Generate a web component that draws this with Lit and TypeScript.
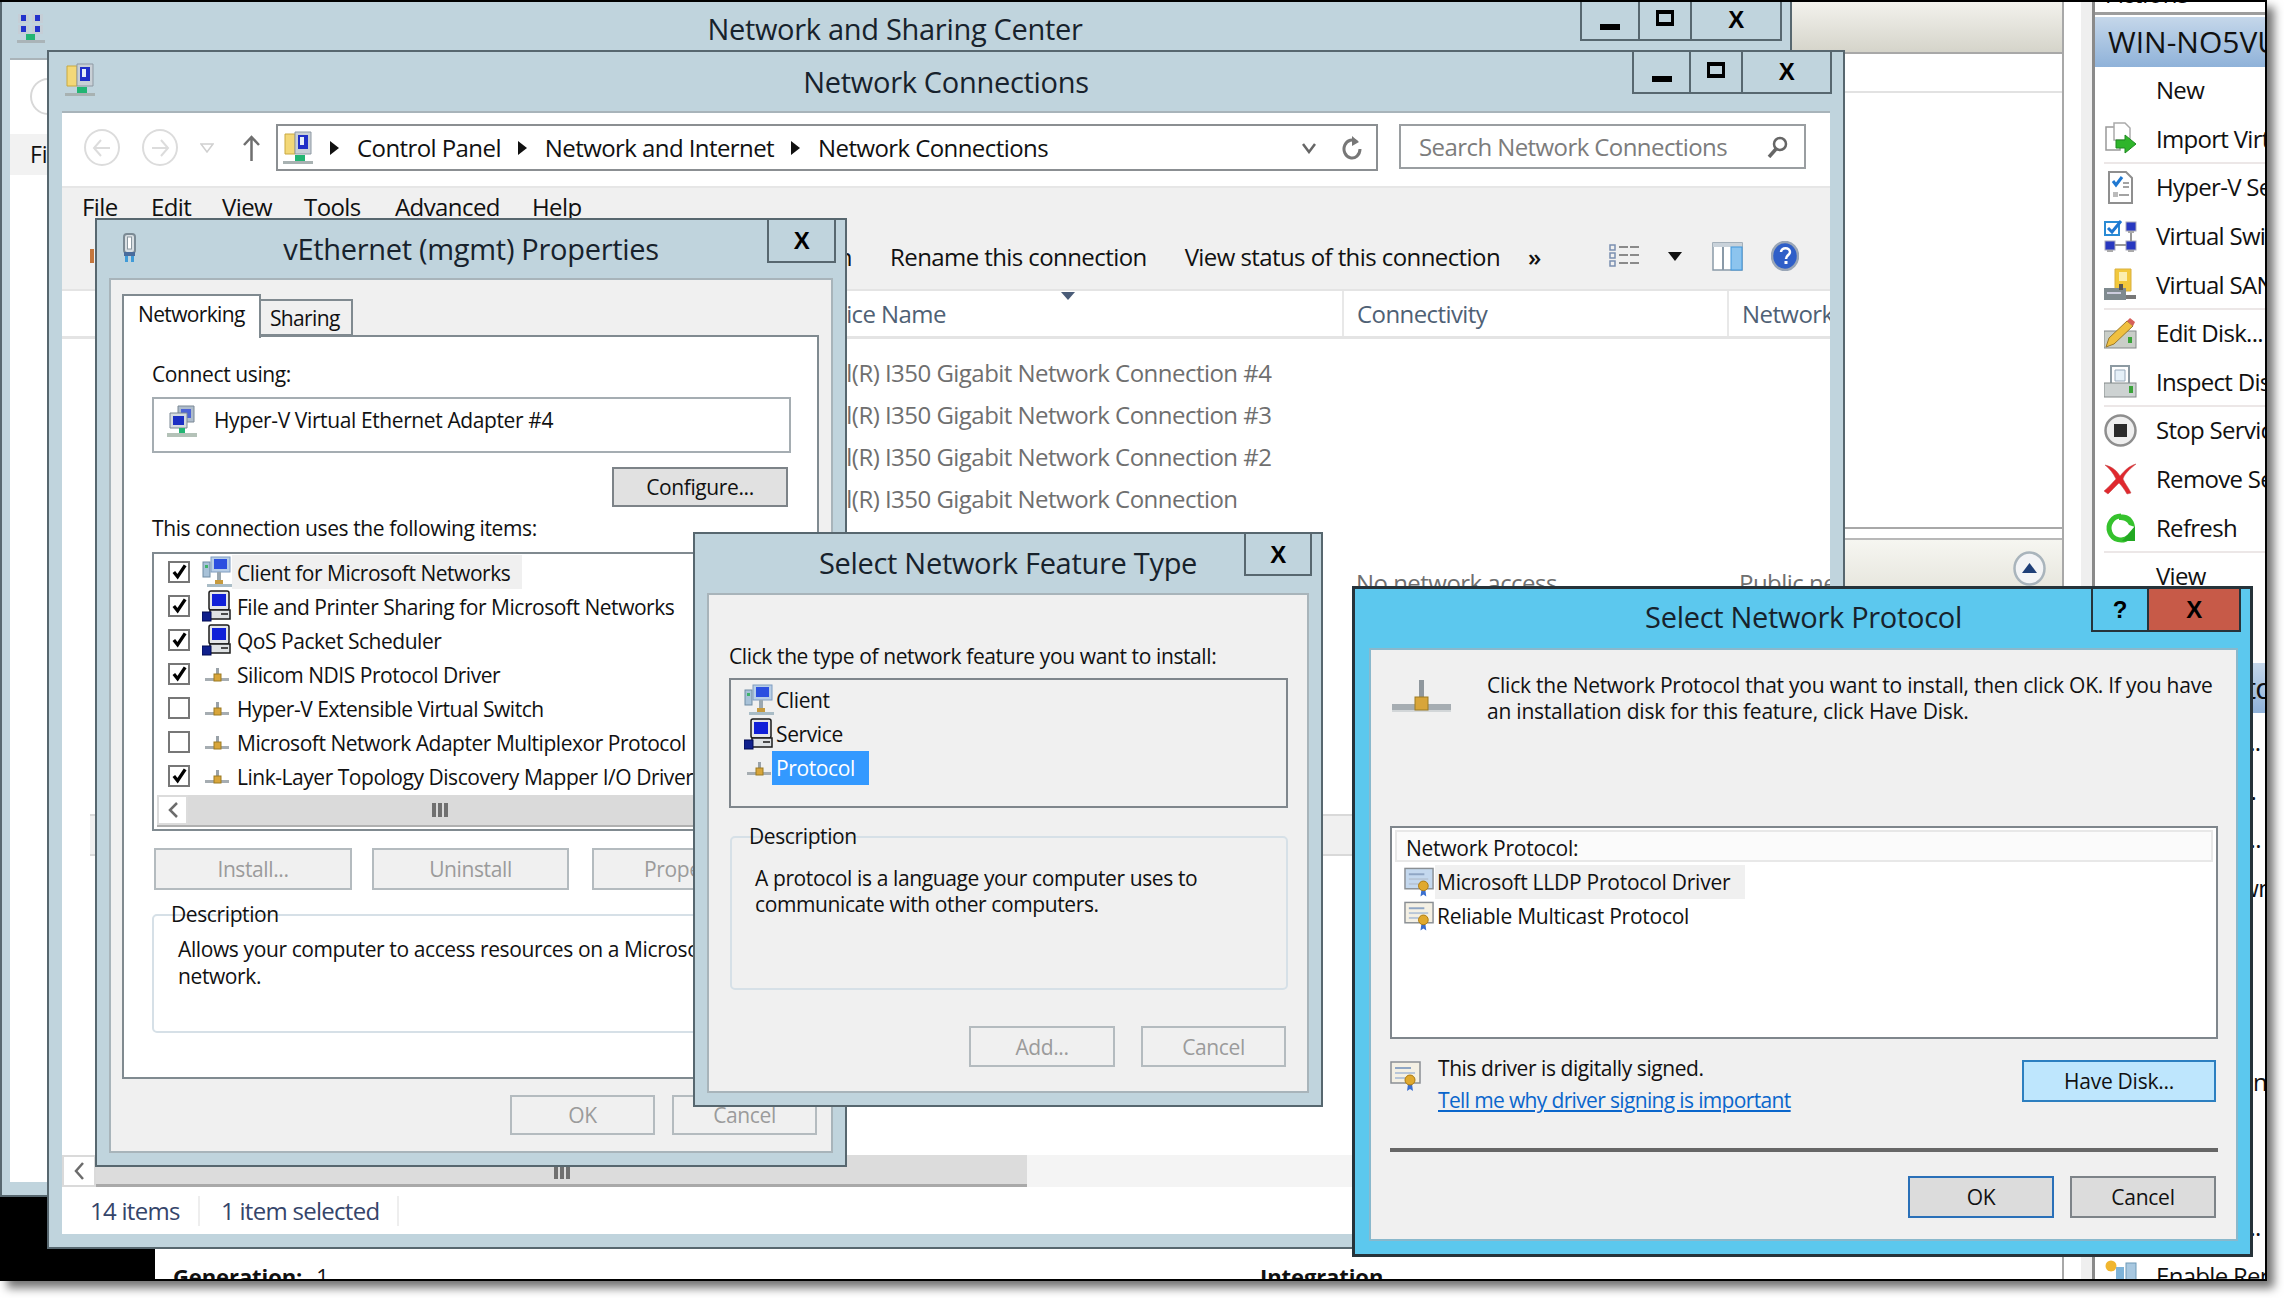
import { LitElement, html, css } from "lit";
import { customElement } from "lit/decorators.js";

const netA = html`<svg class="ic-a" viewBox="0 0 28 30"><rect x="1" y="1" width="11" height="9" fill="#c5ced6"/><rect x="15" y="1" width="11" height="9" fill="#c5ced6"/><rect x="4" y="2" width="5" height="6" fill="#2233cc"/><rect x="18" y="2" width="5" height="6" fill="#2233cc"/><rect x="1" y="12" width="11" height="9" fill="#c5ced6"/><rect x="15" y="12" width="11" height="9" fill="#c5ced6"/><rect x="4" y="13" width="5" height="6" fill="#2233cc"/><rect x="18" y="13" width="5" height="6" fill="#2233cc"/><rect x="9" y="21" width="9" height="7" fill="#22b573"/><rect x="0" y="27" width="28" height="3" fill="#aab4b8"/></svg>`;
const netB = (c = "ic-b") => html`<svg class=${c} viewBox="0 0 30 33"><path d="M2 3h10v20H2z" fill="#f3d878" stroke="#c9a83e"/><path d="M12 1h16v22H12z" fill="#c9d0d6" stroke="#8e99a3"/><path d="M15 4h10v14H15z" fill="#2030c8"/><path d="M17 6h4v8h-4z" fill="#e6eef7"/><path d="M12 24h10v6H12z" fill="#22b573"/><path d="M0 30h30v3H0z" fill="#a8b2b2"/></svg>`;
const adapterIcon = html`<svg class="ic-ad" viewBox="0 0 30 32"><path d="M11 1h16v16H11z" fill="#aebccb" stroke="#7b8894"/><path d="M14 4h10v9H14z" fill="#4c63d8"/><path d="M3 8h17v15H3z" fill="#d5dbe0" stroke="#7b8894"/><path d="M6 11h11v9H6z" fill="#1c2fc4"/><path d="M12 23h6v6h-6z" fill="#22b573"/><path d="M0 28h30v4H0z" fill="#b4c2b8"/></svg>`;
const usbIcon = html`<svg class="ic-usb" viewBox="0 0 15 29"><rect x="2" y="1" width="11" height="19" rx="3" fill="#d9dfe3" stroke="#7b8a94" stroke-width="2"/><rect x="5.500" y="4" width="4" height="12" fill="#fff" stroke="#8b98a0"/><rect x="2" y="19" width="11" height="4" fill="#4a6c9c"/><rect x="3" y="23" width="3" height="6" fill="#3f9bd8"/><rect x="9" y="23" width="3" height="6" fill="#3f9bd8"/></svg>`;
const clientIcon = html`<svg class="ic-li" viewBox="0 0 30 32"><rect x="1" y="6" width="7" height="15" fill="#a8c2d8" stroke="#6f8ba3"/><rect x="3" y="9" width="3" height="3" fill="#3fb36b"/><rect x="9" y="1" width="19" height="15" fill="#b8cee6" stroke="#7f9cc0"/><rect x="12" y="3" width="13" height="10" fill="#2b4fe0"/><rect x="15" y="16" width="4" height="9" fill="#9aa7b0"/><rect x="13" y="24" width="8" height="5" fill="#c69a3e"/><rect x="5" y="28" width="25" height="3" fill="#a9bcc6"/></svg>`;
const serviceIcon = html`<svg class="ic-li" viewBox="0 0 30 32"><rect x="7" y="1" width="20" height="19" rx="2" fill="#e4e6e8" stroke="#1b1b1b" stroke-width="1.500"/><rect x="10" y="4" width="14" height="12" fill="#1020d8"/><rect x="8" y="20" width="20" height="9" fill="#dfe2e4" stroke="#1b1b1b" stroke-width="1.500"/><rect x="19" y="23" width="7" height="2" fill="#4a4a4a"/><rect x="0" y="22" width="9" height="9" fill="#10208c" stroke="#000a50"/></svg>`;
const protoIcon = html`<svg class="ic-li" viewBox="0 0 30 32"><rect x="3" y="20" width="24" height="3" fill="#a6adb2"/><rect x="14" y="10" width="3" height="8" fill="#9aa2a8"/><rect x="12" y="16" width="7" height="7" fill="#d8a53a" stroke="#9b7a22"/></svg>`;
const bigProto = html`<svg class="ic-bp" viewBox="0 0 59 33"><rect x="0" y="25" width="59" height="6" fill="#a6adb2"/><rect x="0" y="31" width="59" height="2" fill="#d2d6d8"/><rect x="27" y="1" width="5" height="20" fill="#8f979d"/><rect x="23" y="18" width="13" height="13" fill="#d8a53a" stroke="#9b7a22"/></svg>`;
const certIcon = (doc = "#c4d8ee", c = "ic-cert") => html`<svg class=${c} viewBox="0 0 32 30"><rect x="1" y="1" width="29" height="21" fill=${doc} stroke="#8a8f94" stroke-width="1.500"/><rect x="5" y="6" width="16" height="2" fill="#8fa6c4"/><rect x="5" y="11" width="20" height="2" fill="#b8c6d8"/><rect x="5" y="16" width="10" height="2" fill="#b8c6d8"/><path d="M18 23l-1 7 3-2 3 2-1-7z" fill="#3a6fd0"/><circle cx="20" cy="19" r="5" fill="#e0a92e" stroke="#ab7b12"/></svg>`;
const checkMark = html`<svg class="chk" viewBox="0 0 18 18"><path d="M3 8.500l4 5 8-12" fill="none" stroke="#000" stroke-width="3.500"/></svg>`;

const acts: Record<string, unknown> = {
  import: html`<svg class="ic-act" viewBox="0 0 33 33"><path d="M2 5h14v23H2z" fill="#fff" stroke="#999" stroke-width="1.500"/><path d="M10 1h11l5 5v12H10z" fill="#fff" stroke="#aaa" stroke-width="1.500"/><path d="M12 18h9v-5l11 9-11 9v-5h-9z" fill="#2fb52b" stroke="#1f8a20"/></svg>`,
  settings: html`<svg class="ic-act" viewBox="0 0 33 33"><path d="M5 1h17l6 6v25H5z" fill="#fff" stroke="#8f8f8f" stroke-width="2"/><path d="M9 10l3 4 6-8" fill="none" stroke="#1f78d1" stroke-width="3"/><path d="M19 12h6M19 16h6M15 24h10" stroke="#a3a3a3" stroke-width="2"/><rect x="9" y="21" width="5" height="5" fill="#bbb"/></svg>`,
  sw: html`<svg class="ic-act" viewBox="0 0 33 33"><rect x="1" y="2" width="14" height="13" fill="#fff" stroke="#2a8bd4" stroke-width="2"/><path d="M4 8l4 4 9-11" fill="none" stroke="#1f78d1" stroke-width="3"/><rect x="22" y="2" width="10" height="9" fill="#2838c0" stroke="#aab"/><rect x="1" y="21" width="10" height="9" fill="#2838c0" stroke="#aab"/><rect x="22" y="21" width="10" height="9" fill="#2838c0" stroke="#aab"/><path d="M27 11v10M11 25h11" stroke="#999" stroke-width="2"/><path d="M3 31h6M24 31h6M24 12h6" stroke="#aaa" stroke-width="2"/></svg>`,
  san: html`<svg class="ic-act" viewBox="0 0 33 33"><path d="M11 1h16v22H11z" fill="#f2c83c" stroke="#d9b040"/><path d="M15 4h8v9h-8z" fill="#fbeeb0"/><rect x="0" y="20" width="22" height="12" fill="#7f8a8f"/><rect x="3" y="24" width="14" height="2" fill="#ccd"/><rect x="15" y="16" width="4" height="6" fill="#555"/><rect x="22" y="27" width="10" height="4" fill="#777"/></svg>`,
  edit: html`<svg class="ic-act" viewBox="0 0 33 33"><rect x="0" y="14" width="32" height="17" fill="#c9cec8" stroke="#84898a"/><rect x="24" y="20" width="4" height="6" fill="#3ba33a"/><path d="M2 30l3-9L23 4l6 5-19 18z" fill="#f0c040" stroke="#9a7a2c"/><path d="M23 4l3-3 5 4-2 4z" fill="#d6605a"/></svg>`,
  inspect: html`<svg class="ic-act" viewBox="0 0 33 33"><path d="M7 1h18v20H7z" fill="#fff" stroke="#8d9aa2" stroke-width="2"/><path d="M11 5h10v11H11z" fill="#e5f0f8" stroke="#9ab"/><rect x="0" y="18" width="32" height="14" fill="#cdd2d2" stroke="#84898a"/><rect x="25" y="21" width="4" height="7" fill="#3ba33a"/></svg>`,
  stop: html`<svg class="ic-act" viewBox="0 0 33 33"><circle cx="16.500" cy="16.500" r="15" fill="#efefef" stroke="#8e8e8e" stroke-width="2.500"/><rect x="10" y="10" width="13" height="13" fill="#2b2b2b"/></svg>`,
  remove: html`<svg class="ic-act" viewBox="0 0 33 33"><path d="M1 2c8 2 12 6 15 11 5-6 9-10 16-12-6 5-11 9-13 15 2 5 6 9 8 14l-4 1c-3-5-5-8-8-11-4 4-7 7-11 11l-4-3c5-4 8-8 12-12C9 10 6 6 1 2z" fill="#e0282e" stroke="#c04a4a" stroke-width=".5"/></svg>`,
  refresh: html`<svg class="ic-act" viewBox="0 0 33 33"><path d="M17 5a12 12 0 1 0 8 21" fill="none" stroke="#35c22d" stroke-width="5"/><path d="M15 4c7-2 15 2 16 12l-6-2c-2-4-5-5-10-5z" fill="#35c22d"/><path d="M31 15v15H18z" fill="#22a822"/></svg>`,
  enable: html`<svg class="ic-act" viewBox="0 0 33 33"><circle cx="7" cy="7" r="5.500" fill="#f0b630"/><rect x="12" y="8" width="8" height="22" fill="#7eb3d8"/><rect x="22" y="4" width="10" height="26" fill="#a8c8e0" stroke="#6f9ab8"/></svg>`,
};

const pItems: [boolean, unknown, string][] = [
  [true, clientIcon, "Client for Microsoft Networks"],
  [true, serviceIcon, "File and Printer Sharing for Microsoft Networks"],
  [true, serviceIcon, "QoS Packet Scheduler"],
  [true, protoIcon, "Silicom NDIS Protocol Driver"],
  [false, protoIcon, "Hyper-V Extensible Virtual Switch"],
  [false, protoIcon, "Microsoft Network Adapter Multiplexor Protocol"],
  [true, protoIcon, "Link-Layer Topology Discovery Mapper I/O Driver"],
];

const actionsA: [string, string, boolean][] = [
  ["New", "", false],
  ["Import Virtual Machine...", "import", true],
  ["Hyper-V Settings...", "settings", false],
  ["Virtual Switch Manager...", "sw", false],
  ["Virtual SAN Manager...", "san", true],
  ["Edit Disk...", "edit", false],
  ["Inspect Disk...", "inspect", true],
  ["Stop Service", "stop", false],
  ["Remove Server", "remove", false],
  ["Refresh", "refresh", true],
  ["View", "", false],
  ["Help", "", false],
];
const actionsB: [string, string][] = [
  ["Connect...", ""], ["Settings...", ""], ["Turn Off...", ""], ["Shut Down...", ""], ["Save", ""], ["Pause", ""],
  ["Reset", ""], ["Checkpoint", ""], ["Move...", ""], ["Export...", ""], ["Rename...", ""], ["Enable Replication...", "enable"],
];

const rows: { name?: string; conn?: string; net?: string; sel?: boolean }[] = [
  { name: "Intel(R) I350 Gigabit Network Connection #4" },
  { name: "Intel(R) I350 Gigabit Network Connection #3" },
  { name: "Intel(R) I350 Gigabit Network Connection #2" },
  { name: "Intel(R) I350 Gigabit Network Connection" },
  {},
  { conn: "No network access", net: "Public network" },
  {}, {}, {}, {}, {},
  { sel: true },
];

@customElement("app-root")
export class AppRoot extends LitElement {
  static styles = css`
    :host { display: block; width: 2284px; height: 1298px; background: #fff; font-family: "Open Sans", "Noto Sans", sans-serif; color: #111; overflow: hidden; }
    * { box-sizing: border-box; }
    svg { display: block; flex: none; }
    .screen { position: relative; width: 2267px; height: 1281px; background: #000; overflow: hidden; }
    .shadow { box-shadow: 7px 7px 9px rgba(0,0,0,.55); width: 2267px; height: 1281px; }
    .edge { position: absolute; inset: 0; border-style: solid; border-color: #000; border-width: 2px 2px 2px 0; pointer-events: none; }

    /* Hyper-V manager behind */
    .hv { position: absolute; left: 155px; top: 0; right: 0; bottom: 0; background: #fff; display: flex; }
    .hv-main { width: 1909px; height: 1281px; border-right: 2px solid #a8a8a8; display: flex; flex-direction: column; }
    .hv-grad { height: 54px; flex: none; background: linear-gradient(#f4f3ee, #d5d4ca); border-bottom: 2px solid #a8a8a8; }
    .hv-line { height: 39px; flex: none; border-bottom: 2px solid #e2e2e2; }
    .hv-body { height: 436px; flex: none; border-bottom: 2px solid #a8a8a8; }
    .hv-panel { margin-top: 9px; height: 60px; flex: none; background: linear-gradient(#f6f6f1, #e4e3da); border-top: 2px solid #b8b8b8; display: flex; justify-content: flex-end; padding: 11px 16px 0 0; }
    .chev { width: 33px; height: 35px; }
    .hv-bottom { margin-top: auto; margin-bottom: -12px; height: 34px; flex: none; display: flex; font-size: 22px; line-height: 34px; letter-spacing: -.1px; padding-left: 18px; }
    .hv-bottom b { flex: none; font-weight: 700; }
    .hv-bottom .g { width: 1087px; flex: none; }
    .hv-bottom .g b { margin-right: 14px; }
    .hv-gutter { width: 28px; flex: none; padding-left: 17px; }
    .hv-gutter div { width: 11px; height: 100%; background: #efefef; }
    .actions { flex: 1; min-width: 0; border-left: 3px solid #8a8a8a; overflow: hidden; white-space: nowrap; }
    .a-top { height: 15px; border-bottom: 3px solid #9d9d9d; font-size: 24px; line-height: 16px; padding-left: 12px; margin-top: 0; overflow: hidden; }
    .a-top span { position: relative; display: block; margin-top: -14px; }
    .a-head { height: 50px; margin-top: 2px; background: linear-gradient(#c5d7ea, #8fb2d9); font-size: 30px; line-height: 50px; padding-left: 13px; color: #111; letter-spacing: 0; }
    .a-row { height: 48.600px; display: flex; align-items: center; margin-left: 9px; font-size: 24px; letter-spacing: -.7px; border-bottom: 2px solid transparent; }
    .a-row.sep { border-bottom-color: #ece7e7; }
    .a-row span { margin-top: -1px; }
    .a-ic { width: 52px; flex: none; }
    .ic-act { width: 33px; height: 33px; }
    .a-gap { height: 13px; }
    .a-head2 { height: 50px; background: linear-gradient(#c5d7ea, #8fb2d9); font-size: 30px; line-height: 50px; padding-left: 13px; letter-spacing: -1px; margin-bottom: 6px; }
    .a-row2 { height: 48.500px; }

    /* Windows */
    .win { position: absolute; background: #c0d4dd; border: 2px solid #57676f; display: flex; flex-direction: column; }
    .tb { display: grid; grid-template-columns: 1fr auto 1fr; flex: none; font-size: 29px; letter-spacing: -.3px; color: #17222c; }
    .tb .title { align-self: center; white-space: nowrap; margin-top: -2px; }
    .ctl { justify-self: end; align-self: start; display: flex; border: 2px solid #57676f; border-top: 0; margin-top: -1px; }
    .ctl > div { display: flex; align-items: center; justify-content: center; border-left: 2px solid #57676f; }
    .ctl > div:first-child { border-left: 0; }
    .x { font: 700 24px/1 "Liberation Sans", sans-serif; color: #000; }
    .q { font: 700 24px/1 "Liberation Sans", sans-serif; color: #000; }
    .mn { width: 20px; height: 6px; background: #000; margin-top: 14px; }
    .mx { width: 18px; height: 16px; border: solid #000; border-width: 4px 3px; margin-top: -4px; }
    .ic-a { width: 28px; height: 30px; margin: 13px 0 0 7px; }
    .ic-b { width: 30px; height: 33px; margin: 11px 0 0 3px; }
    .ic-usb { width: 15px; height: 29px; margin: 13px 0 0 13px; }

    .winA { left: 0; top: 0; width: 1792px; height: 1197px; border-top: 0; padding: 0 10px 13px 8px; }
    .winA .tb { height: 58px; }
    .winA .ctl { margin-right: -2px; }
    .winA .ctl div:nth-child(1) { width: 56px; } .winA .ctl div:nth-child(2) { width: 52px; } .winA .ctl div:nth-child(3) { width: 90px; }
    .winA .ctl { height: 41px; margin-top: 0; }
    .a-inner { flex: 1; background: #fff; border-top: 2px solid #aab4b9; }
    .a-nav { height: 74px; padding: 18px 0 0 20px; }
    .a-nav i { display: block; width: 36px; height: 37px; border-radius: 50%; border: 2px solid #d8d8d8; }
    .a-band { height: 41px; background: #f2f2f2; font-size: 23px; line-height: 41px; padding-left: 20px; }

    .winB { left: 47px; top: 50px; width: 1798px; height: 1199px; padding: 0 13px 13px; }
    .winB .tb { height: 59px; }
    .winB .ctl { margin-right: -2px; height: 42px; margin-top: 0; }
    .winB .ctl div:nth-child(1) { width: 55px; } .winB .ctl div:nth-child(2) { width: 52px; } .winB .ctl div:nth-child(3) { width: 89px; }
    .winB .title { margin-top: 0; }
    .b-inner { flex: 1; min-height: 0; background: #fff; display: flex; flex-direction: column; border-top: 2px solid #a8b4ba; font-size: 24px; letter-spacing: -.58px; white-space: nowrap; overflow: hidden; }
    .addr { height: 73px; flex: none; display: flex; align-items: flex-start; padding-top: 11px; }
    .nav { display: flex; align-items: center; height: 47px; padding-left: 22px; }
    .nav .circ { width: 36px; height: 37px; border-radius: 50%; border: 2px solid #dcdcdc; display: flex; align-items: center; justify-content: center; color: #dcdcdc; }
    .nav .circ + .circ { margin-left: 22px; }
    .nav .drop { margin-left: 22px; width: 14px; height: 10px; }
    .nav .up { margin-left: 29px; width: 17px; height: 28px; margin-right: 16px; }
    .addrbox { width: 1102px; height: 47px; flex: none; border: 2px solid #8b8f92; display: flex; align-items: center; padding-left: 5px; }
    .addrbox .ic-c { width: 30px; height: 33px; flex: none; }
    .crumb { margin: 0 0 0 17px; width: 0; height: 0; border-left: 9px solid #111; border-top: 7px solid transparent; border-bottom: 7px solid transparent; flex: none; }
    .addrbox span { margin-left: 18px; }
    .addrbox .sp { flex: 1; margin: 0; }
    .addrbox svg.v { margin-right: 26px; width: 14px; height: 12px; }
    .addrbox svg.r { margin-right: 14px; width: 20px; height: 26px; }
    .search { margin-left: 21px; width: 407px; height: 45px; flex: none; border: 2px solid #9a9ea1; display: flex; align-items: center; padding: 0 16px 0 18px; color: #7c7c7c; }
    .search span { flex: 1; }
    .search svg { width: 22px; height: 22px; }
    .band { height: 105px; flex: none; background: #f0f0f0; border-top: 2px solid #e6e6e6; border-bottom: 2px solid #e4e4e4; }
    .menu { display: flex; height: 37px; align-items: center; margin-top: -1px; padding: 2px 0 0 20px; }
    .menu span { flex: none; }
    .m1 { width: 69px; } .m2 { width: 71px; } .m3 { width: 82px; } .m4 { width: 91px; } .m5 { width: 137px; }
    .tools { display: flex; align-items: center; height: 38px; margin-top: 13px; padding-left: 28px; }
    .org { display: block; width: 4px; height: 14px; background: #c4763c; flex: none; }
    .diag { width: 758px; text-align: right; flex: none; overflow: hidden; }
    .t-ren { margin-left: 38px; }
    .t-view { margin-left: 38px; }
    .t-more { margin-left: 28px; font-weight: 600; }
    .t-i1 { margin-left: 68px; }
    .t-tri { margin-left: 28px; }
    .t-i2 { margin-left: 30px; }
    .t-i3 { margin-left: 28px; }
    .tri { width: 0; height: 0; border-left: 7px solid transparent; border-right: 7px solid transparent; border-top: 9px solid #111; }
    .cols { height: 48px; flex: none; display: grid; grid-template-columns: 1280px 385px 1fr; border-bottom: 3px solid #e4e4e4; color: #4f6175; position: relative; }
    .cols > div { display: flex; align-items: center; padding-left: 13px; border-left: 2px solid #e8e8e8; overflow: hidden; }
    .cols > div:first-child { padding-left: 743px; border-left: 0; }
    .sort { position: absolute; left: 999px; top: 1px; width: 0; height: 0; border-left: 7px solid transparent; border-right: 7px solid transparent; border-top: 8px solid #4a5c78; }
    .list { flex: 1; min-height: 0; padding-top: 12px; color: #6f6f6f; overflow: hidden; letter-spacing: -.53px; }
    .lrow { height: 42px; display: grid; grid-template-columns: 1280px 385px 1fr; align-items: center; }
    .lrow .n { padding-left: 743px; }
    .lrow .c { padding-left: 14px; }
    .lrow .p { padding-left: 12px; overflow: hidden; }
    .lrow.sel { background: #f0f0f0; border: solid #d9d9d9; border-width: 2px 0; margin: 1px 0 0 28px; }
    .sb { height: 32px; flex: none; display: flex; background: #f4f4f4; }
    .sb .b { width: 34px; background: #fff; border: 2px solid #dadada; display: flex; align-items: center; justify-content: center; }
    .sb .th { width: 931px; background: #dcdcdc; border-bottom: 3px solid #a9a9a9; display: flex; justify-content: center; align-items: center; padding-right: 0; }
    .grip { display: flex; gap: 2px; }
    .grip i { display: block; width: 4px; height: 18px; background: #707070; }
    .status { height: 47px; flex: none; display: flex; align-items: center; color: #35456a; letter-spacing: -.72px; }
    .status .s1 { width: 138px; padding-left: 28px; border-right: 2px solid #eee; height: 30px; line-height: 30px; }
    .status .s2 { width: 199px; padding-left: 21px; border-right: 2px solid #eee; height: 30px; line-height: 30px; }

    /* Dialog common */
    .inner { background: #f0f0f0; border: 2px solid #a8b4ba; flex: 1; min-height: 0; font-size: 21px; letter-spacing: -.39px; line-height: 28px; white-space: nowrap; overflow: hidden; }
    .btn { display: flex; align-items: center; justify-content: center; flex: none; background: #e1e1e1; border: 2px solid #7d8388; }
    .btn.off { background: #f0f0f0; border-color: #b4bbbf; color: #9b9b9b; }
    .group { position: relative; border: 2px solid #d6e0e7; border-radius: 5px; }
    .legend { display: table; margin: -16px 0 0 13px; padding: 0 4px; height: 28px; }

    /* Properties */
    .winP { left: 95px; top: 218px; width: 752px; height: 949px; padding: 0 12px 12px; }
    .winP .tb { height: 58px; }
    .winP .ctl { margin-right: -3px; }
    .ctl1 > div { width: 65px; height: 42px; }
    .ctl1 .x { margin-top: 2px; }
    .p-inner { padding: 14px 0 0 11px; background: #f0f0f0; }
    .tabs { display: flex; height: 41px; position: relative; z-index: 1; letter-spacing: -.65px; }
    .tab { border: 2px solid #808a90; }
    .tab.on { width: 139px; height: 44px; background: #fff; border-bottom: 0; padding: 4px 0 0 14px; }
    .tab.off { width: 92px; height: 37px; margin-top: 5px; border-left: 0; background: #f0f0f0; padding: 3px 0 0 9px; }
    .pane { width: 697px; height: 744px; background: #fff; border: 2px solid #808a90; padding: 23px 0 0 28px; }
    .adp { width: 639px; height: 56px; margin-top: 9px; border: 2px solid #a5adb2; display: flex; align-items: flex-start; padding: 6px 0 0 13px; }
    .adp .ic-ad { width: 30px; height: 32px; margin-right: 17px; }
    .adp span { margin-top: 1px; }
    .cfg { width: 176px; height: 40px; margin: 14px 0 0 460px; }
    .lbl2 { margin-top: 7px; }
    .plist { width: 639px; height: 279px; margin-top: 10px; border: 2px solid #808a90; overflow: hidden; padding-top: 1px; letter-spacing: -.47px; }
    .prow { height: 34px; display: flex; align-items: center; padding-left: 14px; }
    .cb { width: 22px; height: 22px; border: 2px solid #777; flex: none; margin-right: 14px; display: flex; align-items: center; justify-content: center; background: #fff; }
    .chk { width: 17px; height: 17px; }
    .ic-li { width: 30px; height: 32px; margin-left: -2px; }
    .ptext { padding: 0 12px 0 5px; height: 34px; line-height: 36px; }
    .prow.hl .ptext { background: #f0f0f0; }
    .psb { height: 32px; margin: 2px 0 0 3px; display: flex; background: #dadada; border-bottom: 2px solid #b0b0b0; }
    .psb .b { width: 31px; background: #fff; border: 2px solid #dcdcdc; display: flex; align-items: center; justify-content: center; }
    .psb .th { width: 504px; display: flex; justify-content: center; align-items: center; padding-left: 0; }
    .psb .grip i { height: 14px; }
    .btns { display: flex; margin-top: 17px; margin-left: 2px; }
    .b-i { width: 198px; height: 42px; }
    .b-u { width: 197px; height: 42px; margin-left: 20px; }
    .b-pr { width: 198px; height: 42px; margin-left: 23px; justify-content: flex-start; padding-left: 50px; }
    .pgroup { width: 655px; height: 119px; margin-top: 24px; }
    .pgroup p { margin: 8px 0 0 24px; line-height: 27px; }
    .p-foot { display: flex; margin: 16px 0 0 388px; gap: 17px; }
    .p-foot .btn { width: 145px; height: 40px; }

    /* Feature */
    .winF { left: 693px; top: 532px; width: 630px; height: 575px; padding: 0 12px 12px; }
    .winF .tb { height: 59px; }
    .winF .ctl { margin-right: -3px; }
    .winF .ctl1 > div { height: 41px; width: 64px; }
    .f-inner { padding: 47px 0 0 20px; }
    .flist { width: 559px; height: 130px; margin-top: 8px; border: 2px solid #7f868c; padding: 3px 0 0 13px; background: #f0f0f0; }
    .frow { height: 34px; display: flex; align-items: center; }
    .frow .ic-li { margin-left: 0; }
    .frow span { height: 34px; line-height: 34px; padding: 0 14px 0 4px; margin-left: -2px; }
    .frow span.sel { background: #3399ff; color: #fff; }
    .fgroup { width: 558px; height: 154px; margin: 28px 0 0 1px; }
    .fgroup p { margin: 15px 0 0 23px; line-height: 26px; }
    .f-foot { display: flex; gap: 26px; margin: 36px 0 0 240px; }
    .b-add { width: 146px; height: 41px; }
    .b-can { width: 145px; height: 41px; }

    /* Protocol */
    .winN { left: 1352px; top: 586px; width: 901px; height: 671px; padding: 0 12px 13px 14px; background: #5cc8ee; border-color: #26333a; border-width: 3px; }
    .winN .tb { height: 59px; }
    .winN .ctl { margin-right: -3px; border-color: #26333a; height: 43px; margin-top: 0; }
    .winN .ctl > div { border-color: #26333a; }
    .winN .ctl .qb { width: 54px; } .winN .ctl .xb { width: 92px; background: #c75a48; }
    .winN .title { margin-top: -4px; }
    .n-inner { padding: 21px 0 0 19px; border-color: #8ab8cc; letter-spacing: -.25px; }
    .n-top { display: flex; height: 155px; }
    .ic-bp { width: 59px; height: 33px; margin: 8px 36px 0 2px; }
    .n-top p { margin: 1px 0 0; line-height: 26px; letter-spacing: -.23px; }
    .nlist { width: 828px; height: 213px; background: #fff; border: 2px solid #7f868c; padding: 2px 3px; }
    .nhead { height: 32px; border: 2px solid #e8e8e8; background: #fbfbfb; line-height: 32px; padding-left: 9px; margin-bottom: 3px; }
    .nrow { height: 34px; display: flex; align-items: center; padding-left: 9px; }
    .nrow .ic-cert { width: 31px; height: 30px; flex: none; }
    .nrow span { padding: 0 15px 0 2px; height: 34px; line-height: 34px; }
    .nrow.hl span { background: #f0f0f0; }
    .sign { display: flex; height: 64px; margin-top: 13px; }
    .sign .ic-cert { width: 32px; height: 30px; margin: 9px 16px 0 0; }
    .sign .txt { line-height: 32px; width: 584px; letter-spacing: -.43px; }
    .sign a { color: #0a66cc; text-decoration: underline; display: block; letter-spacing: -.65px; }
    .have { width: 194px; height: 42px; margin-top: 8px; background: #bee6fd; border-color: #2c7fc0; }
    .nsep { width: 828px; height: 4px; background: #666; margin-top: 32px; }
    .n-foot { display: flex; gap: 16px; margin: 24px 0 0 518px; }
    .n-foot .btn { width: 146px; height: 42px; background: #dcdcdc; }
    .n-foot .def { border-color: #2a70b8; }
  `;

  private ctl3() {
    return html`<div class="ctl"><div><i class="mn"></i></div><div><i class="mx"></i></div><div><span class="x">X</span></div></div>`;
  }

  private renderHv() {
    return html`<div class="hv">
      <div class="hv-main">
        <div class="hv-grad"></div>
        <div class="hv-line"></div>
        <div class="hv-body"></div>
        <div class="hv-panel"><svg class="chev" viewBox="0 0 33 35"><ellipse cx="16.500" cy="17.500" rx="15" ry="16" fill="#f3f4f6" stroke="#a9b4bc" stroke-width="2.500"/><path d="M9 22l7.500-10L24 22z" fill="#1f3f78"/></svg></div>
        <div class="hv-bottom"><div class="g"><b>Generation:</b>1</div><b>Integration</b></div>
      </div>
      <div class="hv-gutter"><div></div></div>
      <div class="actions">
        <div class="a-top"><span>Actions</span></div>
        <div class="a-head">WIN-NO5VU1ABCD</div>
        ${actionsA.map(([t, ic, sep]) => html`<div class="a-row ${sep ? "sep" : ""}"><div class="a-ic">${ic ? acts[ic] : ""}</div><span>${t}</span></div>`)}
        <div class="a-gap"></div>
        <div class="a-head2">Win2012 Std</div>
        ${actionsB.map(([t, ic]) => html`<div class="a-row a-row2"><div class="a-ic">${ic ? acts[ic] : ""}</div><span>${t}</span></div>`)}
      </div>
    </div>`;
  }

  private renderA() {
    return html`<div class="win winA">
      <div class="tb">${netA}<div class="title">Network and Sharing Center</div>${this.ctl3()}</div>
      <div class="a-inner"><div class="a-nav"><i></i></div><div class="a-band">File</div></div>
    </div>`;
  }

  private renderB() {
    return html`<div class="win winB">
      <div class="tb">${netB()}<div class="title">Network Connections</div>${this.ctl3()}</div>
      <div class="b-inner">
        <div class="addr">
          <div class="nav">
            <div class="circ"><svg width="20" height="18" viewBox="0 0 20 18"><path d="M9 1L2 9l7 8M2 9h16" fill="none" stroke="#dcdcdc" stroke-width="2"/></svg></div>
            <div class="circ"><svg width="20" height="18" viewBox="0 0 20 18"><path d="M11 1l7 8-7 8M18 9H2" fill="none" stroke="#dcdcdc" stroke-width="2"/></svg></div>
            <svg class="drop" viewBox="0 0 14 10"><path d="M1 1h12L7 9z" fill="none" stroke="#d0d0d0" stroke-width="1.500"/></svg>
            <svg class="up" viewBox="0 0 17 28"><path d="M8.500 27V3M1 11l7.500-8L16 11" fill="none" stroke="#6f6f6f" stroke-width="2.500"/></svg>
          </div>
          <div class="addrbox">
            ${netB("ic-c")}
            <i class="crumb"></i><span>Control Panel</span>
            <i class="crumb"></i><span>Network and Internet</span>
            <i class="crumb"></i><span>Network Connections</span>
            <span class="sp"></span>
            <svg class="v" viewBox="0 0 14 12"><path d="M1 2l6 8 6-8" fill="none" stroke="#666" stroke-width="2.500"/></svg>
            <svg class="r" viewBox="0 0 20 26"><path d="M15 7a8 9 0 1 0 3 7" fill="none" stroke="#777" stroke-width="3"/><path d="M10 1l7 6-7 4z" fill="#777"/></svg>
          </div>
          <div class="search"><span>Search Network Connections</span><svg viewBox="0 0 22 22"><circle cx="14" cy="8" r="6" fill="none" stroke="#666" stroke-width="2.500"/><path d="M10 13l-7 8" stroke="#666" stroke-width="3.500"/></svg></div>
        </div>
        <div class="band">
          <div class="menu"><span class="m1">File</span><span class="m2">Edit</span><span class="m3">View</span><span class="m4">Tools</span><span class="m5">Advanced</span><span>Help</span></div>
          <div class="tools">
            <i class="org"></i><span class="diag">Diagnose this connection</span>
            <span class="t-ren">Rename this connection</span>
            <span class="t-view">View status of this connection</span>
            <span class="t-more">»</span>
            <svg class="t-i1" width="31" height="26" viewBox="0 0 31 26"><g fill="none" stroke="#7a8fb0" stroke-width="1.500"><rect x="1" y="2" width="5" height="5"/><rect x="1" y="10" width="5" height="5"/><rect x="1" y="18" width="5" height="5"/></g><path d="M10 4h20M10 12h20M10 20h20" stroke="#8a8a8a" stroke-width="2" stroke-dasharray="9 2"/></svg>
            <i class="tri t-tri"></i>
            <svg class="t-i2" width="31" height="29" viewBox="0 0 31 29"><rect x="1" y="1" width="29" height="27" fill="#fff" stroke="#8a9aa8" stroke-width="1.500"/><rect x="1" y="1" width="29" height="4" fill="#c9d2da"/><rect x="10" y="5" width="2" height="23" fill="#8a9aa8"/><rect x="19" y="5" width="11" height="23" fill="#8cc4ee" stroke="#3f96dc"/></svg>
            <svg class="t-i3" width="28" height="30" viewBox="0 0 28 30"><ellipse cx="14" cy="15" rx="13" ry="14" fill="#2f5fc8" stroke="#9aa6b6" stroke-width="2.500"/><path d="M10 11c0-5 9-5 9 0 0 3-4 3-4 7" fill="none" stroke="#fff" stroke-width="2.500"/><rect x="13.500" y="20" width="3" height="3" fill="#fff"/></svg>
          </div>
        </div>
        <div class="cols"><div>Device Name</div><div>Connectivity</div><div>Network Category</div><i class="sort"></i></div>
        <div class="list">
          ${rows.map((r) => html`<div class="lrow ${r.sel ? "sel" : ""}"><div class="n">${r.name ?? ""}</div><div class="c">${r.conn ?? ""}</div><div class="p">${r.net ?? ""}</div></div>`)}
        </div>
        <div class="sb"><div class="b"><svg width="12" height="20" viewBox="0 0 12 20"><path d="M10 2L3 10l7 8" fill="none" stroke="#6c6c6c" stroke-width="2.500"/></svg></div><div class="th"><div class="grip"><i></i><i></i><i></i></div></div></div>
        <div class="status"><div class="s1">14 items</div><div class="s2">1 item selected</div></div>
      </div>
    </div>`;
  }

  private renderP() {
    return html`<div class="win winP">
      <div class="tb">${usbIcon}<div class="title">vEthernet (mgmt) Properties</div><div class="ctl ctl1"><div><span class="x">X</span></div></div></div>
      <div class="inner p-inner">
        <div class="tabs"><div class="tab on">Networking</div><div class="tab off">Sharing</div></div>
        <div class="pane">
          <div>Connect using:</div>
          <div class="adp">${adapterIcon}<span>Hyper-V Virtual Ethernet Adapter #4</span></div>
          <div class="btn cfg">Configure...</div>
          <div class="lbl2">This connection uses the following items:</div>
          <div class="plist">
            ${pItems.map(([c, ic, t], i) => html`<div class="prow ${i === 0 ? "hl" : ""}"><div class="cb">${c ? checkMark : ""}</div>${ic}<div class="ptext">${t}</div></div>`)}
            <div class="psb"><div class="b"><svg width="12" height="18" viewBox="0 0 12 18"><path d="M10 2L3 9l7 7" fill="none" stroke="#6c6c6c" stroke-width="2.500"/></svg></div><div class="th"><div class="grip"><i></i><i></i><i></i></div></div></div>
          </div>
          <div class="btns"><div class="btn off b-i">Install...</div><div class="btn off b-u">Uninstall</div><div class="btn off b-pr">Properties</div></div>
          <div class="group pgroup"><div class="legend">Description</div><p>Allows your computer to access resources on a Microsoft<br />network.</p></div>
        </div>
        <div class="p-foot"><div class="btn off">OK</div><div class="btn off">Cancel</div></div>
      </div>
    </div>`;
  }

  private renderF() {
    return html`<div class="win winF">
      <div class="tb"><div></div><div class="title">Select Network Feature Type</div><div class="ctl ctl1"><div><span class="x">X</span></div></div></div>
      <div class="inner f-inner">
        <div>Click the type of network feature you want to install:</div>
        <div class="flist">
          <div class="frow">${clientIcon}<span>Client</span></div>
          <div class="frow">${serviceIcon}<span>Service</span></div>
          <div class="frow">${protoIcon}<span class="sel">Protocol</span></div>
        </div>
        <div class="group fgroup"><div class="legend">Description</div><p>A protocol is a language your computer uses to<br />communicate with other computers.</p></div>
        <div class="f-foot"><div class="btn off b-add">Add...</div><div class="btn off b-can">Cancel</div></div>
      </div>
    </div>`;
  }

  private renderN() {
    return html`<div class="win winN">
      <div class="tb"><div></div><div class="title">Select Network Protocol</div><div class="ctl"><div class="qb"><span class="q">?</span></div><div class="xb"><span class="x">X</span></div></div></div>
      <div class="inner n-inner">
        <div class="n-top">${bigProto}<p>Click the Network Protocol that you want to install, then click OK. If you have<br />an installation disk for this feature, click Have Disk.</p></div>
        <div class="nlist">
          <div class="nhead">Network Protocol:</div>
          <div class="nrow hl">${certIcon("#c4d8ee")}<span>Microsoft LLDP Protocol Driver</span></div>
          <div class="nrow">${certIcon("#f4f0e4")}<span>Reliable Multicast Protocol</span></div>
        </div>
        <div class="sign">${certIcon("#f4f0e4")}<div class="txt">This driver is digitally signed.<a>Tell me why driver signing is important</a></div><div class="btn have">Have Disk...</div></div>
        <div class="nsep"></div>
        <div class="n-foot"><div class="btn def">OK</div><div class="btn">Cancel</div></div>
      </div>
    </div>`;
  }

  render() {
    return html`<div class="shadow"><div class="screen">
      ${this.renderHv()}${this.renderA()}${this.renderB()}${this.renderP()}${this.renderF()}${this.renderN()}
      <div class="edge"></div>
    </div></div>`;
  }
}
